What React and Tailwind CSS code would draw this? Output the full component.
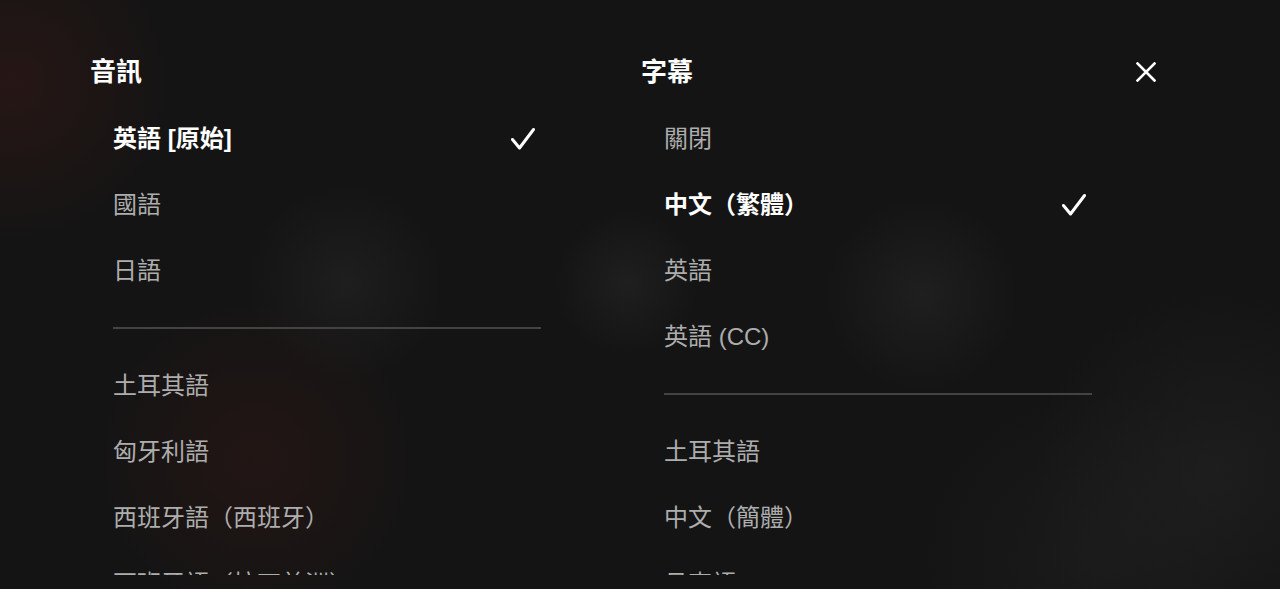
import React from "react";

const FONT = {
  fontFamily: '"Liberation Sans", "Noto Sans CJK TC", sans-serif',
};

function Check() {
  return (
    <svg width="24" height="24" viewBox="0 0 24 24" fill="none" className="shrink-0">
      <path d="M1.5 12.5 L8.5 21 L22.5 2.5" stroke="#ffffff" strokeWidth="3" strokeLinecap="round" strokeLinejoin="round" />
    </svg>
  );
}

function CloseIcon() {
  return (
    <svg width="20" height="20" viewBox="0 0 20 20" fill="none">
      <path d="M1.5 1.5 L18.5 18.5 M18.5 1.5 L1.5 18.5" stroke="#ffffff" strokeWidth="2.6" strokeLinecap="square" />
    </svg>
  );
}

function Row({ label, selected }) {
  return (
    <div className="flex h-[66px] items-center justify-between pr-[6px]">
      <span
        className={
          selected
            ? "text-[24px] leading-[32px] font-bold text-white whitespace-nowrap"
            : "text-[24px] leading-[32px] font-normal text-[#adadad] whitespace-nowrap"
        }
      >
        {label}
      </span>
      {selected ? <Check /> : null}
    </div>
  );
}

function Divider() {
  return <div className="mt-[23px] mb-[24px] h-[2px] bg-[#434343]" />;
}

export default function App() {
  const audioTop = [
    { label: "英語 [原始]", selected: true },
    { label: "國語" },
    { label: "日語" },
  ];
  const audioBottom = [
    { label: "土耳其語" },
    { label: "匈牙利語" },
    { label: "西班牙語（西班牙）" },
    { label: "西班牙語（拉丁美洲）" },
  ];
  const subTop = [
    { label: "關閉" },
    { label: "中文（繁體）", selected: true },
    { label: "英語" },
    { label: "英語 (CC)" },
  ];
  const subBottom = [
    { label: "土耳其語" },
    { label: "中文（簡體）" },
    { label: "丹麥語" },
  ];

  return (
    <div
      style={FONT}
      className="relative h-[589px] w-full overflow-hidden bg-[#141414] bg-[radial-gradient(circle_at_1%_14%,rgba(60,26,22,0.45)_0%,rgba(20,20,20,0)_12%),radial-gradient(circle_at_20%_78%,rgba(55,24,20,0.4)_0%,rgba(20,20,20,0)_15%),radial-gradient(circle_at_27%_48%,rgba(40,40,40,0.5)_0%,rgba(20,20,20,0)_10%),radial-gradient(circle_at_49%_48%,rgba(40,40,40,0.55)_0%,rgba(20,20,20,0)_10%),radial-gradient(circle_at_72%_50%,rgba(40,40,40,0.55)_0%,rgba(20,20,20,0)_10%),radial-gradient(circle_at_95%_80%,rgba(38,38,38,0.5)_0%,rgba(20,20,20,0)_14%),radial-gradient(circle_at_85%_95%,rgba(36,36,36,0.4)_0%,rgba(20,20,20,0)_14%)]"
    >
      <div className="flex h-[575px] overflow-hidden px-[90px] pt-[56px]">
        {/* Audio column */}
        <div className="flex w-[551px] shrink-0 flex-col">
          <div className="text-[26px] leading-[32px] font-bold text-white">音訊</div>
          <div className="mt-[18px] ml-[23px] w-[428px]">
            {audioTop.map((r) => (
              <Row key={r.label} {...r} />
            ))}
            <Divider />
            {audioBottom.map((r) => (
              <Row key={r.label} {...r} />
            ))}
          </div>
        </div>

        {/* Subtitle column */}
        <div className="flex flex-col">
          <div className="flex w-[515px] items-center justify-between">
            <div className="text-[26px] leading-[32px] font-bold text-white">字幕</div>
            <CloseIcon />
          </div>
          <div className="mt-[18px] ml-[23px] w-[428px]">
            {subTop.map((r) => (
              <Row key={r.label} {...r} />
            ))}
            <Divider />
            {subBottom.map((r) => (
              <Row key={r.label} {...r} />
            ))}
          </div>
        </div>
      </div>
    </div>
  );
}
